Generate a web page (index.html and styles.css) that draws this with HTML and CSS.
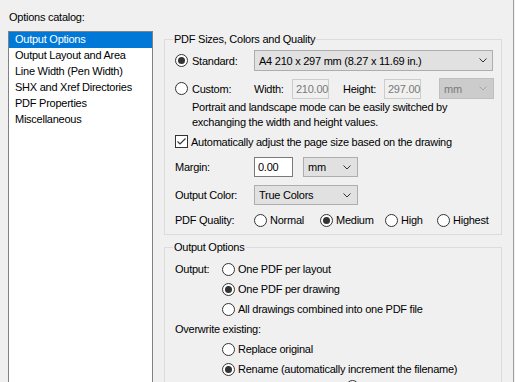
FILE: index.html
```html
<!DOCTYPE html>
<html>
<head>
<meta charset="utf-8">
<title>Options</title>
<link rel="stylesheet" href="styles.css">
</head>
<body>
<div class="dialog">
  <div class="catalog">
    <div class="catalog-title">Options catalog:</div>
    <ul class="list">
      <li class="selected">Output Options</li>
      <li>Output Layout and Area</li>
      <li>Line Width (Pen Width)</li>
      <li>SHX and Xref Directories</li>
      <li>PDF Properties</li>
      <li>Miscellaneous</li>
    </ul>
  </div>
  <div class="panel">
    <fieldset class="group">
      <legend>PDF Sizes, Colors and Quality</legend>
      <div class="body g1">
        <div class="row row-std">
          <div class="opt lbl"><span class="radio checked"></span><span>Standard:</span></div>
          <div class="combo w-std"><span>A4 210 x 297 mm (8.27 x 11.69 in.)</span><svg class="chev" width="8" height="5" viewBox="0 0 8 5"><polyline points="0.5,0.5 4,4 7.5,0.5" fill="none" stroke="#333" stroke-width="1"/></svg></div>
        </div>
        <div class="row row-custom">
          <div class="opt lbl"><span class="radio"></span><span>Custom:</span></div>
          <span class="fld-lbl w-width">Width:</span>
          <div class="input disabled w-num">210.00</div>
          <span class="fld-lbl w-height">Height:</span>
          <div class="input disabled w-num">297.00</div>
          <div class="combo disabled w-unit-d"><span>mm</span><svg class="chev" width="8" height="5" viewBox="0 0 8 5"><polyline points="0.5,0.5 4,4 7.5,0.5" fill="none" stroke="#a6a6a6" stroke-width="1"/></svg></div>
        </div>
        <p class="note">Portrait and landscape mode can be easily switched by<br>exchanging the width and height values.</p>
        <div class="row row-check">
          <span class="check"><svg width="11" height="11" viewBox="0 0 11 11"><polyline points="1.5,5.5 4,8 9.5,2.5" fill="none" stroke="#333" stroke-width="1.1"/></svg></span>
          <span>Automatically adjust the page size based on the drawing</span>
        </div>
        <div class="row row-field">
          <span class="lbl">Margin:</span>
          <div class="input w-margin">0.00</div>
          <div class="combo w-unit"><span>mm</span><svg class="chev" width="8" height="5" viewBox="0 0 8 5"><polyline points="0.5,0.5 4,4 7.5,0.5" fill="none" stroke="#333" stroke-width="1"/></svg></div>
        </div>
        <div class="row row-field">
          <span class="lbl">Output Color:</span>
          <div class="combo w-color"><span>True Colors</span><svg class="chev" width="8" height="5" viewBox="0 0 8 5"><polyline points="0.5,0.5 4,4 7.5,0.5" fill="none" stroke="#333" stroke-width="1"/></svg></div>
        </div>
        <div class="row row-quality">
          <span class="lbl">PDF Quality:</span>
          <div class="opt q-normal"><span class="radio"></span><span>Normal</span></div>
          <div class="opt q-medium"><span class="radio checked"></span><span>Medium</span></div>
          <div class="opt q-high"><span class="radio"></span><span>High</span></div>
          <div class="opt"><span class="radio"></span><span>Highest</span></div>
        </div>
      </div>
    </fieldset>
    <fieldset class="group group-2">
      <legend>Output Options</legend>
      <div class="body g2">
        <div class="orow"><span class="olbl">Output:</span><div class="opt"><span class="radio"></span><span>One PDF per layout</span></div></div>
        <div class="orow indent"><div class="opt"><span class="radio checked"></span><span>One PDF per drawing</span></div></div>
        <div class="orow indent"><div class="opt"><span class="radio"></span><span>All drawings combined into one PDF file</span></div></div>
        <div class="orow"><span>Overwrite existing:</span></div>
        <div class="orow indent"><div class="opt"><span class="radio"></span><span>Replace original</span></div></div>
        <div class="orow indent"><div class="opt"><span class="radio checked"></span><span>Rename (automatically increment the filename)</span></div></div>
        <div class="orow tail"><span class="radio"></span></div>
      </div>
    </fieldset>
  </div>
</div>
</body>
</html>
```

FILE: styles.css
```css
* { box-sizing: border-box; }

html, body {
  margin: 0;
  padding: 0;
  background: #f0f0f0;
}

body {
  font-family: "Liberation Sans", Arial, sans-serif;
  font-size: 11px;
  letter-spacing: -0.25px;
  color: #000;
}

.dialog {
  display: flex;
  height: 382px;
  overflow: hidden;
  background: #f0f0f0;
}

/* left catalog */
.catalog {
  width: 153px;
  flex: none;
  padding: 10px 0 0 8px;
  display: flex;
  flex-direction: column;
}

.catalog-title {
  line-height: 15px;
  height: 15px;
  padding-left: 1px;
}

.list {
  list-style: none;
  margin: 6px 0 0 0;
  padding: 0;
  flex: 1;
  min-height: 400px;
  background: #fff;
  border: 1px solid #828282;
}

.list li {
  height: 16px;
  line-height: 15px;
  padding-left: 6px;
  white-space: nowrap;
}

.list li.selected {
  background: #0078d7;
  color: #fff;
}

/* right panel */
.panel {
  flex: 1;
  min-width: 0;
  padding: 32px 11px 0 11px;
  margin-right: 1px;
  border-right: 1px solid #a0a0a0;
  overflow: hidden;
}

.group {
  margin: 0;
  padding: 4px 7px 6px 8px;
  border: 1px solid #dcdcdc;
  min-inline-size: 0;
}

.group legend {
  padding: 0 1px;
  line-height: 14px;
  height: 14px;
}

.group-2 {
  margin-top: 5px;
  padding-top: 5px;
}

.body {
  padding-left: 2px;
}

.row {
  display: flex;
  align-items: center;
  white-space: nowrap;
}

.opt {
  display: flex;
  align-items: center;
  gap: 3px;
  white-space: nowrap;
}

.lbl {
  width: 79px;
  flex: none;
}

.opt.lbl { gap: 4px; }

.radio {
  width: 13px;
  height: 13px;
  flex: none;
  border: 1px solid #333;
  border-radius: 50%;
  background: #fff;
  display: inline-flex;
  align-items: center;
  justify-content: center;
}

.radio.checked::after {
  content: "";
  width: 7px;
  height: 7px;
  border-radius: 50%;
  background: #333;
}

.check {
  width: 13px;
  height: 13px;
  flex: none;
  border: 1px solid #333;
  background: #fff;
  display: inline-flex;
  margin-right: 3px;
}

.check svg { display: block; }

.combo {
  display: flex;
  align-items: center;
  justify-content: space-between;
  background: #e1e1e1;
  border: 1px solid #adadad;
  padding: 0 5px 0 4px;
  height: 20px;
  flex: none;
}

.combo .chev { display: block; flex: none; }

.combo.disabled {
  background: #cccccc;
  border-color: #bfbfbf;
  color: #7a7a7a;
}

.input {
  height: 20px;
  border: 1px solid #7a7a7a;
  background: #fff;
  padding: 0 3px;
  line-height: 18px;
  flex: none;
}

.input.disabled {
  border-color: #cccccc;
  background: #f0f0f0;
  color: #7a7a7a;
}

/* group 1 rows */
.row-std { height: 21px; }
.row-std .combo { height: 21px; }
.w-std { width: 239px; }

.row-custom { height: 21px; margin-top: 7px; }
.fld-lbl { flex: none; }
.w-width { width: 38px; }
.w-height { width: 41px; margin-left: 14px; }
.w-num { width: 37px; }
.w-unit-d { width: 55px; height: 21px; margin-left: 18px; padding-right: 6px; }

.note {
  margin: 1px 0 0 0;
  padding-left: 17px;
  line-height: 15px;
}

.row-check { height: 15px; margin-top: 4px; }

.row-field { height: 20px; margin-top: 8px; }
.w-margin { width: 39px; }
.w-unit { width: 55px; margin-left: 10px; padding-right: 6px; }
.w-color { width: 104px; padding-right: 6px; }

.row-quality { height: 16px; margin-top: 7px; }
.q-normal { width: 66px; flex: none; }
.q-medium { width: 65px; flex: none; }
.q-high { width: 52px; flex: none; }

/* group 2 rows */
.orow {
  display: flex;
  align-items: center;
  height: 20px;
  white-space: nowrap;
}

.olbl { width: 47px; flex: none; }

.indent { padding-left: 47px; }

.tail {
  align-items: flex-start;
  padding-top: 1px;
  padding-left: 171px;
}
```
